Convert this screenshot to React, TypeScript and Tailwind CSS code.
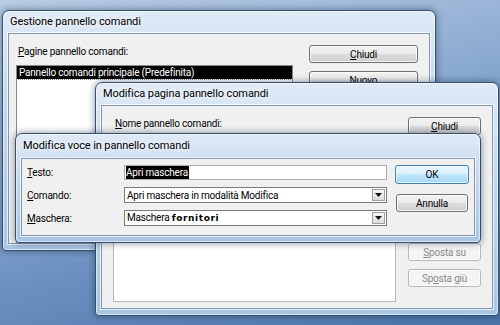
import type { ReactNode } from 'react'

const font = { fontFamily: 'Roboto, "Noto Sans", sans-serif' }

interface WinProps {
  title: string
  className: string
  children: ReactNode
  titleClass?: string
}

function Win({ title, className, children, titleClass = 'h-[22px]' }: WinProps) {
  return (
    <div
      className={`absolute flex flex-col rounded-t-[7px] rounded-b-[4px] border border-[#33506f] bg-[linear-gradient(180deg,#dfeaf6_0%,#c6daee_35%,#a9c5e4_100%)] shadow-[0_0_6px_1px_rgba(20,35,60,0.4),inset_0_0_0_1px_rgba(255,255,255,0.55)] ${className}`}
    >
      <div className={`flex items-center pl-[7px] text-[11px] tracking-[-0.1px] text-black ${titleClass}`}>
        <span className="[text-shadow:0_0_5px_#fff,0_0_8px_#fff]">{title}</span>
      </div>
      <div className="mx-[5px] mb-[6px] min-h-0 flex-1 overflow-hidden border border-[#8197b2] bg-[#f0f0f0] text-[10px] tracking-[-0.2px] shadow-[0_0_0_1px_rgba(255,255,255,0.7)]">
        {children}
      </div>
    </div>
  )
}

function Btn({ children, className = '', disabled = false, def = false }: { children: ReactNode; className?: string; disabled?: boolean; def?: boolean }) {
  const look = disabled
    ? 'border-[#b5b8bb] bg-[#f4f4f4] text-[#8a8a8a]'
    : def
      ? 'border-[#3c7fb1] bg-[linear-gradient(180deg,#eaf6fd_0%,#d9f0fc_50%,#bee6fd_50%,#a7d9f5_100%)] text-black'
      : 'border-[#707070] bg-[linear-gradient(180deg,#f2f2f2_0%,#ebebeb_50%,#dddddd_50%,#cfcfcf_100%)] text-black'
  return (
    <div
      className={`flex h-[18px] items-center justify-center rounded-[3px] border shadow-[inset_0_0_0_1px_rgba(255,255,255,0.75)] ${look} ${className}`}
    >
      {children}
    </div>
  )
}

function Combo({ children }: { children: ReactNode }) {
  return (
    <div className="flex h-[16px] items-center border border-[#7a7a7a] bg-white pl-[2px]">
      <div className="flex-1 truncate">{children}</div>
      <div className="mr-[1px] flex h-[12px] w-[13px] items-center justify-center border border-[#a0a0a0] bg-[linear-gradient(180deg,#f6f6f6,#dcdcdc)]">
        <svg width="7" height="4" viewBox="0 0 7 4">
          <path d="M0 0h7L3.5 4z" fill="#111" />
        </svg>
      </div>
    </div>
  )
}

function U({ c }: { c: string }) {
  return <span className="underline underline-offset-[1px]">{c}</span>
}

export default function App() {
  return (
    <div
      style={font}
      className="relative h-[325px] w-[500px] overflow-hidden bg-[linear-gradient(165deg,#b9cde4_0%,#93b0d4_35%,#6a8fc0_65%,#4a73a8_100%)] text-black"
    >
      {/* Gestione pannello comandi */}
      <Win title="Gestione pannello comandi" className="left-[2px] top-[10px] h-[241px] w-[434px]">
        <div className="flex gap-[16px] pl-[7px] pr-[11px] pt-[11px]">
          <div className="flex w-[277px] flex-col">
            <div className="ml-[2px] leading-[14px]">
              <U c="P" />agine pannello comandi:
            </div>
            <div className="mt-[6px] h-[180px] border border-[#828790] bg-white">
              <div className="h-[13px] bg-black pl-[2px] leading-[13px] text-white outline-1 outline-dotted outline-[#888]">
                Pannello comandi principale (Predefinita)
              </div>
            </div>
          </div>
          <div className="flex flex-1 flex-col gap-[8px]">
            <Btn>
              <U c="C" />hiudi
            </Btn>
            <Btn>
              <U c="N" />uovo
            </Btn>
          </div>
        </div>
      </Win>

      {/* Modifica pagina pannello comandi */}
      <Win title="Modifica pagina pannello comandi" className="left-[95px] top-[82px] h-[234px] w-[404px]">
        <div className="flex h-full gap-[12px] pb-[6px] pl-[11px] pr-[11px] pt-[11px]">
          <div className="flex w-[283px] flex-col">
            <div className="ml-[2px] leading-[14px]">
              <U c="N" />ome pannello comandi:
            </div>
            <div className="mt-[4px] h-[18px] border border-[#abadb3] bg-white" />
            <div className="mt-[24px] flex-1 border border-[#b3b7bd] bg-white" />
          </div>
          <div className="flex flex-1 flex-col">
            <Btn>
              <U c="C" />hiudi
            </Btn>
            <Btn disabled className="mt-[108px]">
              <U c="S" />posta su
            </Btn>
            <Btn disabled className="mt-[8px]">
              Sp<U c="o" />sta giù
            </Btn>
          </div>
        </div>
      </Win>

      {/* Modifica voce in pannello comandi */}
      <Win
        title="Modifica voce in pannello comandi"
        titleClass="h-[24px]"
        className="left-[15px] top-[133px] h-[110px] w-[466px] border-[#1d3552]"
      >
        <div className="flex gap-[8px] pl-[5px] pr-[5px] pt-[6px]">
          <div className="flex w-[360px] flex-col gap-[7px]">
            <div className="flex items-center">
              <div className="w-[97px]">
                <U c="T" />esto:
              </div>
              <div className="flex h-[15px] flex-1 items-center border border-[#abadb3] bg-white pl-[1px]">
                <span className="bg-black pr-[1px] leading-[13px] text-white">Apri maschera</span>
              </div>
            </div>
            <div className="flex items-center">
              <div className="w-[97px]">
                <U c="C" />omando:
              </div>
              <div className="flex-1">
                <Combo>Apri maschera in modalità Modifica</Combo>
              </div>
            </div>
            <div className="flex items-center">
              <div className="w-[97px]">
                <U c="M" />aschera:
              </div>
              <div className="flex-1">
                <Combo>
                  Maschera{' '}
                  <span className="font-bold tracking-[0.6px]" style={{ fontFamily: '"DejaVu Sans", sans-serif', fontSize: '9px' }}>
                    fornitori
                  </span>
                </Combo>
              </div>
            </div>
          </div>
          <div className="flex flex-1 flex-col gap-[10px]">
            <Btn def className="h-[19px]">OK</Btn>
            <Btn className="mx-[1px]">Annulla</Btn>
          </div>
        </div>
      </Win>
    </div>
  )
}
